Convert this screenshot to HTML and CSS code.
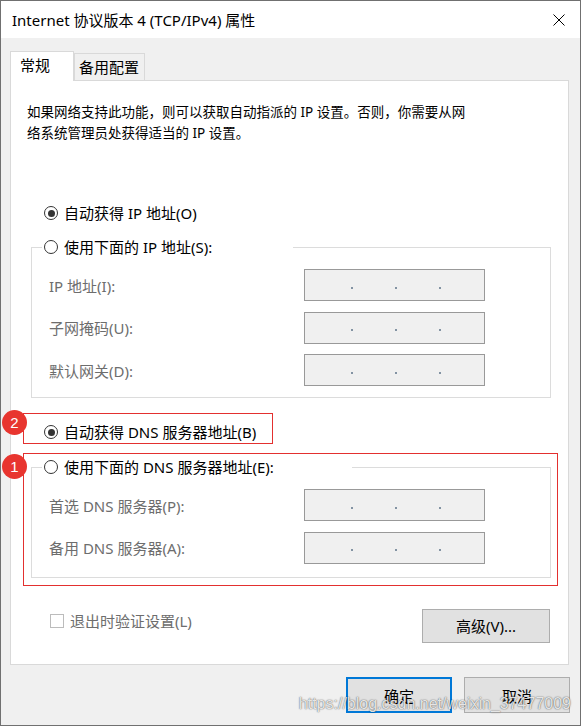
FILE: index.html
```html
<!DOCTYPE html>
<html lang="zh-CN">
<head>
    <meta charset="UTF-8">
    <meta name="viewport" content="width=device-width, initial-scale=1.0">
    <title>Internet 协议版本 4 (TCP/IPv4) 属性</title>
    <link rel="stylesheet" href="styles.css">
</head>
<body>

    <div class="window">
        <div class="titlebar">
            <span class="title">Internet 协议版本 4 (TCP/IPv4) 属性</span>
            <svg class="close" viewBox="0 0 12 12" width="12" height="12">
                <path d="M0.5 0.5 L11.5 11.5 M11.5 0.5 L0.5 11.5" stroke="#000" stroke-width="1" fill="none"/>
            </svg>
        </div>

        <div class="tabs">
            <div class="tab tab-general active">常规</div>
            <div class="tab tab-alt">备用配置</div>
        </div>

        <div class="panel">
            <p class="desc">如果网络支持此功能，则可以获取自动指派的 IP 设置。否则，你需要从网<br>络系统管理员处获得适当的 IP 设置。</p>

            <div class="option option-auto-ip"><span class="radio checked"></span>自动获得 IP 地址(O)</div>

            <fieldset class="group group-ip">
                <legend>
                    <div class="option"><span class="radio"></span>使用下面的 IP 地址(S):</div>
                </legend>
                <div class="rows">
                    <div class="row">
                        <span class="row-label">IP 地址(I):</span>
                        <div class="ip-box"><i></i><i></i><i></i></div>
                    </div>
                    <div class="row">
                        <span class="row-label">子网掩码(U):</span>
                        <div class="ip-box"><i></i><i></i><i></i></div>
                    </div>
                    <div class="row">
                        <span class="row-label">默认网关(D):</span>
                        <div class="ip-box"><i></i><i></i><i></i></div>
                    </div>
                </div>
            </fieldset>

            <div class="option option-auto-dns"><span class="radio checked"></span>自动获得 DNS 服务器地址(B)</div>

            <fieldset class="group group-dns">
                <legend>
                    <div class="option"><span class="radio"></span>使用下面的 DNS 服务器地址(E):</div>
                </legend>
                <div class="rows">
                    <div class="row">
                        <span class="row-label">首选 DNS 服务器(P):</span>
                        <div class="ip-box"><i></i><i></i><i></i></div>
                    </div>
                    <div class="row">
                        <span class="row-label">备用 DNS 服务器(A):</span>
                        <div class="ip-box"><i></i><i></i><i></i></div>
                    </div>
                </div>
            </fieldset>

            <div class="bottom-row">
                <div class="check"><span class="box"></span>退出时验证设置(L)</div>
                <button class="btn btn-advanced">高级(V)...</button>
            </div>
        </div>

        <div class="footer">
            <button class="btn primary">确定</button>
            <button class="btn">取消</button>
        </div>

        <!-- annotations drawn over the dialog -->
        <div class="mark mark-auto"></div>
        <div class="mark mark-manual"></div>
        <div class="badge badge-2">2</div>
        <div class="badge badge-1">1</div>

        <div class="watermark">https://blog.csdn.net/weixin_37477009</div>
    </div>

</body>
</html>
```

FILE: styles.css
```css
body {
    margin: 0;
    font-family: "Noto Sans", "Noto Sans CJK SC", sans-serif;
    font-size: 15px;
    color: #000;
}

.window {
    position: relative;
    width: 581px;
    height: 726px;
    box-sizing: border-box;
    border: 1px solid #707070;
    background: #f0f0f0;
    overflow: hidden;
}

.titlebar {
    height: 37px;
    background: #fff;
    display: flex;
    align-items: center;
    padding: 0 15px 0 11px;
}

.title {
    font-size: 15px;
}

.close {
    margin-left: auto;
}

/* tabs */
.tabs {
    display: flex;
    align-items: flex-end;
    height: 29px;
    margin: 13px 0 0 9px;
}

.tab {
    height: 27px;
    box-sizing: border-box;
    border: 1px solid #d9d9d9;
    border-bottom: none;
    background: #f0f0f0;
    line-height: 26px;
}

.tab.active {
    height: 30px;
    background: #fff;
    position: relative;
    z-index: 1;
    margin-bottom: -1px;
}

.tab-general {
    width: 64px;
    padding-left: 9px;
}

.tab-alt {
    width: 71px;
    padding-left: 4px;
}

.panel {
    margin: 0 11px 0 9px;
    height: 585px;
    box-sizing: border-box;
    border: 1px solid #d9d9d9;
    background: #fff;
}

.desc {
    margin: 0;
    padding: 21px 16px 0;
    font-size: 13.5px;
    line-height: 21px;
}

/* radio options */
.option {
    display: flex;
    align-items: center;
    gap: 6px;
    height: 22px;
    line-height: 22px;
    white-space: nowrap;
}

.option-auto-ip {
    margin: 58px 0 0 33px;
}

.option-auto-dns {
    margin: 23px 0 0 33px;
}

.radio {
    flex: none;
    width: 14px;
    height: 14px;
    box-sizing: border-box;
    border: 1px solid #333;
    border-radius: 50%;
    background: #fff;
    display: flex;
    align-items: center;
    justify-content: center;
}

.radio.checked::after {
    content: "";
    width: 7px;
    height: 7px;
    border-radius: 50%;
    background: #333;
}

/* group boxes */
.group {
    margin: 12px 17px 0 20px;
    padding: 11px 0;
    border: 1px solid #dcdcdc;
    min-inline-size: 0;
}

.group legend {
    margin-left: 10px;
    padding: 0 0 0 2px;
    box-sizing: border-box;
    width: 251px;
}

.group-dns {
    margin-top: 13px;
    padding-bottom: 13px;
}

.group-dns legend {
    width: 310px;
}

.rows {
    display: flex;
    flex-direction: column;
    gap: 10.5px;
    padding-left: 17px;
}

.row {
    display: flex;
    align-items: center;
}

.row-label {
    width: 255px;
    color: #6d6d6d;
}

.ip-box {
    width: 181px;
    height: 32px;
    box-sizing: border-box;
    border: 1px solid #999;
    background: #f0f0f0;
    display: flex;
    align-items: center;
    gap: 42px;
    padding: 5px 0 0 46px;
}

.ip-box i {
    width: 2px;
    height: 2px;
    background: #8393a3;
}

/* bottom of the tab page */
.bottom-row {
    display: flex;
    justify-content: space-between;
    align-items: flex-start;
    margin: 31px 18px 0 39px;
}

.check {
    display: flex;
    align-items: center;
    gap: 6px;
    line-height: 24px;
    color: #6d6d6d;
}

.box {
    width: 14px;
    height: 14px;
    box-sizing: border-box;
    border: 1px solid #bcbcbc;
    background: #fff;
}

.btn {
    font-family: inherit;
    font-size: 15px;
    color: #000;
    background: #e1e1e1;
    border: 1px solid #adadad;
    padding: 0;
}

.btn-advanced {
    width: 128px;
    height: 34px;
}

.footer {
    display: flex;
    justify-content: flex-end;
    gap: 12px;
    margin: 12px 10px 0 0;
}

.footer .btn {
    width: 106px;
    height: 36px;
}

.btn.primary {
    border: 2px solid #0078d7;
}

/* red annotations */
.mark {
    position: absolute;
    box-sizing: border-box;
    border: 1px solid #e3302f;
}

.mark-auto {
    left: 22px;
    top: 412px;
    width: 250px;
    height: 31px;
}

.mark-manual {
    left: 22px;
    top: 452px;
    width: 535px;
    height: 133px;
}

.badge {
    position: absolute;
    left: 1px;
    width: 25px;
    height: 25px;
    border-radius: 50%;
    background: #e8352f;
    color: #fff;
    font-family: "Liberation Sans", sans-serif;
    font-size: 15px;
    line-height: 25px;
    text-align: center;
}

.badge-2 {
    top: 409px;
}

.badge-1 {
    top: 453px;
}

.watermark {
    position: absolute;
    right: 9px;
    top: 695px;
    font-family: "Liberation Sans", sans-serif;
    font-size: 16px;
    line-height: 16px;
    color: rgba(255, 255, 255, 0.85);
    text-shadow: 0 0 1px rgba(0, 0, 0, 0.6), 0 0 2px rgba(0, 0, 0, 0.3);
    white-space: nowrap;
}
```
